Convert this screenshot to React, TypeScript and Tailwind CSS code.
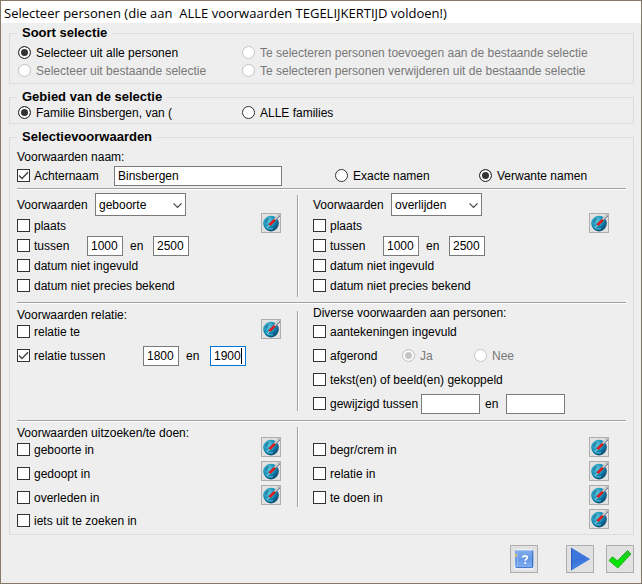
import type { InputHTMLAttributes, ReactNode } from 'react';
import clsx from 'clsx';

type ToggleProps = InputHTMLAttributes<HTMLInputElement> & {
  label: string;
};

function Check({ label, className, ...props }: ToggleProps) {
  return (
    <label className={clsx('flex items-center gap-1 pb-px', className)}>
      <span className="relative flex shrink-0">
        <input
          type="checkbox"
          className="peer h-[13px] w-[13px] appearance-none border border-[#333] bg-white"
          {...props}
        />
        <svg
          viewBox="0 0 13 13"
          className="pointer-events-none absolute inset-0 hidden h-[13px] w-[13px] peer-checked:block"
          fill="none"
          stroke="#404040"
          strokeWidth="1.3"
        >
          <path d="M2 6.5 L5 9.5 L11 3.2" />
        </svg>
      </span>
      <span className="whitespace-nowrap">{label}</span>
    </label>
  );
}

function Radio({ label, className, ...props }: ToggleProps) {
  return (
    <label className={clsx('flex items-center gap-[5px]', props.disabled && 'text-[#787878]', className)}>
      <input
        type="radio"
        className="mb-px h-[13px] w-[13px] shrink-0 appearance-none rounded-full border border-[#333] bg-white checked:bg-[#333] checked:shadow-[inset_0_0_0_2px_white] disabled:border-[#c4c4c4] disabled:checked:bg-[#c4c4c4]"
        {...props}
      />
      <span className="whitespace-nowrap">{label}</span>
    </label>
  );
}

function TextBox({ label, value, className = 'w-9 border-[#7a7a7a]' }: { label: string; value?: string; className?: string }) {
  return (
    <input
      type="text"
      aria-label={label}
      defaultValue={value}
      className={clsx('h-5 shrink-0 border bg-white pl-[3px] outline-none', className)}
    />
  );
}

function Panel({ title, children }: { title: string; children: ReactNode }) {
  return (
    <fieldset className="min-w-0 border border-[#dcdcdc] px-[7px]">
      <legend className="px-[5px] text-[13px] leading-4 font-bold">{title}</legend>
      {children}
    </fieldset>
  );
}

function Picker({ options }: { options: string[] }) {
  return (
    <label className="flex h-[23px] items-center">
      <span className="w-[78px]">Voorwaarden</span>
      <span className="relative flex">
        <select className="h-[23px] w-[91px] appearance-none border border-[#7a7a7a] bg-white pl-[3px] outline-none">
          {options.map((name) => (
            <option key={name}>{name}</option>
          ))}
        </select>
        <svg
          viewBox="0 0 9 5"
          className="pointer-events-none absolute top-[10px] right-1 h-[5px] w-[9px]"
          fill="none"
          stroke="#444"
          strokeWidth="1.2"
        >
          <path d="M0.5 0.4 L4.5 4.4 L8.5 0.4" />
        </svg>
      </span>
    </label>
  );
}

function GlobeIcon() {
  return (
    <svg viewBox="0 0 18 18" className="h-[18px] w-[18px]">
      <defs>
        <radialGradient id="globe" cx="0.35" cy="0.3" r="0.75">
          <stop offset="0" stopColor="#63cbe2" />
          <stop offset="0.5" stopColor="#1a93bb" />
          <stop offset="1" stopColor="#07456c" />
        </radialGradient>
      </defs>
      <circle cx="9" cy="9.6" r="7.8" fill="url(#globe)" />
      <path d="M2.5 7 Q4 4 7 4 L6.5 7 L4 9 Z M10 14 L13 11 L15.5 11 L13 15 L10 16 Z" fill="#0a5b84" opacity="0.5" />
      <path d="M4 12.5 Q7 16 11 14.5" stroke="#35b9d4" strokeWidth="1.3" fill="none" />
      <path d="M12.5 6.2 L17.5 0.8" stroke="#7b8085" strokeWidth="2.6" />
      <path d="M12.6 5.4 L17 0.8" stroke="#e6e9eb" strokeWidth="1.3" />
      <path d="M7.4 11.2 L12.8 5.8" stroke="#e31b1b" strokeWidth="2.6" />
      <path d="M5.6 13.2 L7.4 11.6" stroke="#e8eef0" strokeWidth="1" />
    </svg>
  );
}

function GlobeButtons({ names, className }: { names: string[]; className?: string }) {
  return (
    <div className={clsx('flex flex-col gap-1', className)}>
      {names.map((name) => (
        <button
          key={name}
          type="button"
          aria-label={`Kies plaats: ${name}`}
          className="flex h-5 w-5 items-center justify-center border border-[#adadad] bg-[#e1e1e1]"
        >
          <GlobeIcon />
        </button>
      ))}
    </div>
  );
}

// etched lines: grey with a white edge
function Separator() {
  return <div className="h-0.5 border-t border-[#a0a0a0] bg-white" />;
}

function Rule({ className = 'my-[5px]' }: { className?: string }) {
  return <div className={clsx('border-l border-[#a0a0a0] bg-white', className)} />;
}

function Columns({ children }: { children: ReactNode }) {
  return <div className="grid grid-cols-[280px_2px_1fr]">{children}</div>;
}

function Column({ right, buttons, children }: { right?: boolean; buttons?: ReactNode; children: ReactNode }) {
  return (
    <div className={clsx('flex items-start justify-between', right ? 'pr-[17px] pl-[14px]' : 'pr-4')}>
      <div>{children}</div>
      {buttons}
    </div>
  );
}

function EventFilter({ options }: { options: string[] }) {
  return (
    <div className="pt-[3px] pb-1.5">
      <Picker options={options} />
      <Check label="plaats" className="h-5" />
      <div className="flex h-5 items-center">
        <Check label="tussen" className="w-[70px]" />
        <TextBox label={`${options[0]} vanaf jaar`} value="1000" />
        <span className="w-[30px] pl-[7px]">en</span>
        <TextBox label={`${options[0]} tot jaar`} value="2500" />
      </div>
      <Check label="datum niet ingevuld" className="h-5" />
      <Check label="datum niet precies bekend" className="h-5" />
    </div>
  );
}

const footerButton = 'flex h-7 w-7 items-center justify-center border border-[#adadad] bg-[#e1e1e1]';

export default function App() {
  return (
    <form
      className="border border-[#857a68] bg-[#eee] text-[12px] leading-4 text-black"
      style={{ fontFamily: '"Liberation Sans", Arial, sans-serif' }}
    >
      <h1
        className="h-[22px] bg-white pl-[3px] text-[13px] leading-6 whitespace-pre"
        style={{ fontFamily: '"Open Sans", "Noto Sans", sans-serif' }}
      >
        {'Selecteer personen (die aan  ALLE voorwaarden TEGELIJKERTIJD voldoen!)'}
      </h1>

      <div className="flex flex-col gap-[5px] pt-0.5 pr-[7px] pl-2">
        <Panel title="Soort selectie">
          <div className="grid grid-cols-[224px_1fr] px-px py-[3px]">
            <Radio name="soort" label="Selecteer uit alle personen" defaultChecked className="h-[18px]" />
            <Radio name="soort" label="Te selecteren personen toevoegen aan de bestaande selectie" disabled />
            <Radio name="soort" label="Selecteer uit bestaande selectie" disabled className="h-[18px]" />
            <Radio name="soort" label="Te selecteren personen verwijderen uit de bestaande selectie" disabled />
          </div>
        </Panel>

        <Panel title="Gebied van de selectie">
          <div className="grid grid-cols-[224px_1fr] px-px pb-0.5">
            <Radio name="gebied" label="Familie Binsbergen, van (" defaultChecked />
            <Radio name="gebied" label="ALLE families" />
          </div>
        </Panel>

        <Panel title="Selectievoorwaarden">
          <div className="pt-1">Voorwaarden naam:</div>
          <div className="mt-px mb-0.5 flex h-5 items-center">
            <Check label="Achternaam" defaultChecked className="w-[97px]" />
            <TextBox label="Achternaam" value="Binsbergen" className="w-[168px] border-[#7a7a7a]" />
            <Radio name="namen" label="Exacte namen" className="ml-[53px] w-36" />
            <Radio name="namen" label="Verwante namen" defaultChecked />
          </div>

          <Separator />
          <Columns>
            <Column buttons={<GlobeButtons names={['geboorte']} className="mt-[23px]" />}>
              <EventFilter options={['geboorte', 'doop']} />
            </Column>
            <Rule />
            <Column right buttons={<GlobeButtons names={['overlijden']} className="mt-[23px]" />}>
              <EventFilter options={['overlijden', 'begrafenis']} />
            </Column>
          </Columns>

          <Separator />
          <Columns>
            <Column buttons={<GlobeButtons names={['relatie']} className="mt-[15px]" />}>
              <div className="h-4 pt-[3px]">Voorwaarden relatie:</div>
              <Check label="relatie te" className="h-6" />
              <div className="flex h-6 items-center">
                <Check label="relatie tussen" defaultChecked className="w-[126px]" />
                <TextBox label="relatie vanaf jaar" value="1800" />
                <span className="w-[31px] pl-[7px]">en</span>
                <span className="relative flex">
                  <TextBox label="relatie tot jaar" value="1900" className="w-9 border-[#0078d7]" />
                  <span className="absolute top-0.5 right-1 h-4 w-px bg-black" />
                </span>
              </div>
            </Column>
            <Rule className="mt-[7px] mb-[9px]" />
            <Column right>
              <div className="h-4 pt-px">Diverse voorwaarden aan personen:</div>
              <Check label="aantekeningen ingevuld" className="h-6" />
              <div className="flex h-6 items-center">
                <Check label="afgerond" className="w-[89px]" />
                <Radio name="afgerond" label="Ja" disabled defaultChecked className="w-[72px]" />
                <Radio name="afgerond" label="Nee" disabled />
              </div>
              <Check label="tekst(en) of beeld(en) gekoppeld" className="h-6" />
              <div className="mb-1 flex h-6 items-center">
                <Check label="gewijzigd tussen" className="w-[108px]" />
                <TextBox label="gewijzigd vanaf" className="w-[59px] border-[#7a7a7a]" />
                <span className="w-[26px] pl-[5px]">en</span>
                <TextBox label="gewijzigd tot" className="w-[59px] border-[#7a7a7a]" />
              </div>
            </Column>
          </Columns>

          <Separator />
          <Columns>
            <Column
              buttons={<GlobeButtons names={['geboorte in', 'gedoopt in', 'overleden in']} className="mt-[15px]" />}
            >
              <div className="h-4 pt-[3px]">Voorwaarden uitzoeken/te doen:</div>
              <Check label="geboorte in" className="h-6" />
              <Check label="gedoopt in" className="h-6" />
              <Check label="overleden in" className="h-6" />
              <Check label="iets uit te zoeken in" className="mb-0.5 h-[22px]" />
            </Column>
            <Rule className="mt-[5px] mb-[27px]" />
            <Column
              right
              buttons={
                <GlobeButtons
                  names={['begr/crem in', 'relatie in', 'te doen in', 'iets uit te zoeken in']}
                  className="mt-[15px]"
                />
              }
            >
              <div className="pt-4">
                <Check label="begr/crem in" className="h-6" />
                <Check label="relatie in" className="h-6" />
                <Check label="te doen in" className="h-6" />
              </div>
            </Column>
          </Columns>
        </Panel>
      </div>

      <div className="flex justify-end gap-3 py-[10px] pr-[7px]">
        <button type="button" aria-label="Help" className={clsx(footerButton, 'mr-4')}>
          <svg viewBox="0 0 26 26" className="h-[26px] w-[26px]">
            <defs>
              <linearGradient id="book" x1="0" y1="0" x2="0" y2="1">
                <stop offset="0" stopColor="#85adec" />
                <stop offset="0.5" stopColor="#6598e6" />
                <stop offset="1" stopColor="#82b0f2" />
              </linearGradient>
            </defs>
            <path d="M3 22 L4 23.5 H22 L23 22 V20 H3 Z" fill="#f6f9fd" />
            <rect x="4" y="4" width="18.5" height="18" rx="1.5" fill="url(#book)" />
            <path d="M5 3.8 H21" stroke="#f4f8fe" />
            <path d="M21.5 5 V21" stroke="#4472c4" />
            <path d="M5 21.6 H21.5" stroke="#4472c4" />
            <path d="M6.5 5 V21" stroke="#8fb4f0" />
            <rect x="4" y="8" width="1.5" height="3" fill="#e6c34a" />
            <path
              d="M11.6 11.6 Q11.8 9.8 14 9.8 Q16.3 9.8 16.3 11.6 Q16.3 12.6 15.1 13.2 Q14.2 13.7 14.2 14.8"
              stroke="#fff"
              strokeWidth="1.7"
              fill="none"
            />
            <rect x="13.3" y="16" width="1.8" height="1.8" fill="#fff" />
          </svg>
        </button>
        <button type="button" aria-label="Uitvoeren" className={footerButton}>
          <svg viewBox="0 0 26 26" className="h-[26px] w-[26px]">
            <defs>
              <linearGradient id="play" x1="0" y1="0" x2="0.6" y2="1">
                <stop offset="0" stopColor="#2f66cf" />
                <stop offset="1" stopColor="#5390ee" />
              </linearGradient>
            </defs>
            <path d="M4 1.5 L23 13 L4 24.5 Z" fill="#3d76dc" />
            <path d="M4 16 Q10 10.5 23 13 L4 24.5 Z" fill="url(#play)" />
            <path d="M4.5 2 V24" stroke="#2c5cc2" />
          </svg>
        </button>
        <button type="submit" aria-label="OK" className={footerButton}>
          <svg viewBox="0 0 26 26" className="h-[26px] w-[26px]">
            <defs>
              <linearGradient id="ok" x1="0" y1="0" x2="0" y2="1">
                <stop offset="0" stopColor="#3ab53a" />
                <stop offset="0.5" stopColor="#05e005" />
                <stop offset="1" stopColor="#0be80b" />
              </linearGradient>
            </defs>
            <path
              d="M2 14.5 L5.5 10.8 L10.5 14.8 L20.5 4.5 L24 8 L10.8 22 Z"
              fill="url(#ok)"
              stroke="#0ca50c"
              strokeWidth="0.8"
            />
          </svg>
        </button>
      </div>
    </form>
  );
}
